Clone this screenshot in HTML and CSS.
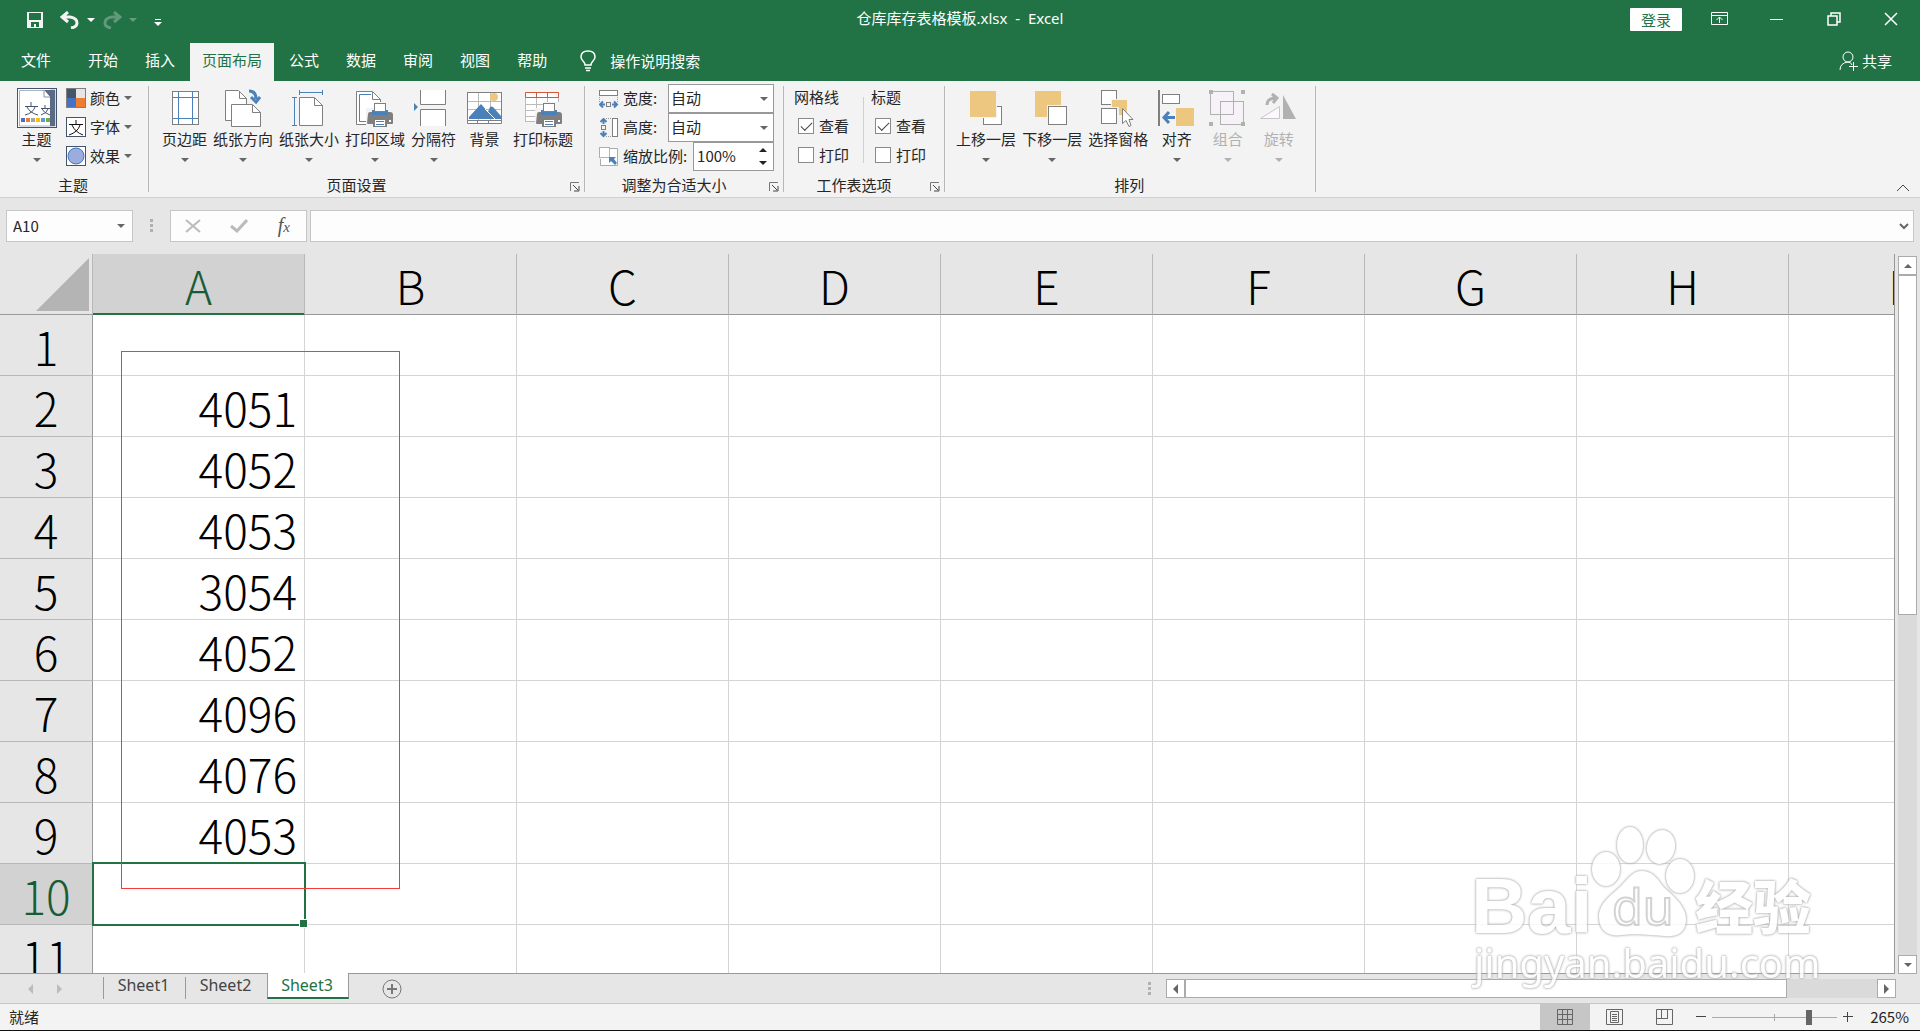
FILE: index.html
```html
<!DOCTYPE html>
<html lang="zh-CN">
<head>
    <meta charset="UTF-8">
    <meta name="viewport" content="width=device-width, initial-scale=1.0">
    <title>仓库库存表格模板.xlsx - Excel</title>
    <link rel="stylesheet" href="styles.css">
</head>
<body>

    <!-- shared icon parts -->
    <svg class="defs" width="0" height="0" aria-hidden="true">
        <symbol id="printer" viewBox="0 0 26 24">
            <path d="M1 11q0-2 2-2h20q3 0 3 3v8q0 1-1 1h-5v3H6v-3H1q-1 0-1-1z" fill="#7f7f7f"/>
            <rect x="5" y="7" width="16" height="5" fill="#4a81ba"/>
            <rect x="7.500" y=".5" width="11" height="8" fill="#fff" stroke="#7f7f7f"/>
            <rect x="7.500" y="16.500" width="11" height="7" fill="#fff" stroke="#7f7f7f"/>
            <path d="M9 18.500h8M9 21.500h8" stroke="#4a81ba"/>
            <rect x="22" y="17" width="2" height="2" fill="#fff"/>
        </symbol>
        <symbol id="launcher" viewBox="0 0 10 10">
            <path d="M.5 9V.5H9" fill="none" stroke="#777"/>
            <path d="M3 3l5 5M9 4v5H4" fill="none" stroke="#444"/>
        </symbol>
    </svg>

    <header class="titlebar">
        <div class="quick-access">
            <button type="button" aria-label="保存">
                <svg width="18" height="18" viewBox="0 0 18 18"><path fill="#f3f3f3" fill-rule="evenodd" d="M1 1h16v16H1zM3 2v7h12V2zM5 11v5h3v-3h2v3h3v-5z"/></svg>
            </button>
            <button type="button" class="undo" aria-label="撤消">
                <svg width="20" height="18" viewBox="0 0 20 18"><path d="M8 1L2 6l6 5M2 6h8q7 1 7 6 0 4-6 5" fill="none" stroke="#f3f3f3" stroke-width="3"/></svg>
                <span class="arrow"></span>
            </button>
            <button type="button" class="redo" aria-label="恢复" disabled>
                <svg width="20" height="18" viewBox="0 0 20 18"><path d="M12 1l6 5-6 5M18 6h-8q-7 1-7 6 0 4 6 5" fill="none" stroke="#f3f3f3" stroke-width="3"/></svg>
                <span class="arrow"></span>
            </button>
            <button type="button" class="customize" aria-label="自定义快速访问工具栏"><span class="bar"></span><span class="arrow"></span></button>
        </div>
        <div class="doc-title">仓库库存表格模板.xlsx&nbsp; -&nbsp; Excel</div>
        <div class="window-buttons">
            <button type="button" class="login">登录</button>
            <button type="button" class="win" aria-label="功能区显示选项">
                <svg width="18" height="14" viewBox="0 0 18 14"><path d="M.5.5h16v12H.5zM0 3.500h17M8.500 11V5M5.500 8l3-3 3 3" fill="none" stroke="#fff"/></svg>
            </button>
            <button type="button" class="win" aria-label="最小化">
                <svg width="14" height="14" viewBox="0 0 14 14"><path d="M0 7.500h13" stroke="#fff"/></svg>
            </button>
            <button type="button" class="win" aria-label="还原">
                <svg width="14" height="14" viewBox="0 0 14 14"><path d="M1 4h9v9H1zM4 4V1h9v9h-3" fill="none" stroke="#fff" stroke-width="1.500"/></svg>
            </button>
            <button type="button" class="win" aria-label="关闭">
                <svg width="14" height="14" viewBox="0 0 14 14"><path d="M1 1l12 12M13 1L1 13" stroke="#fff" stroke-width="1.500"/></svg>
            </button>
        </div>
    </header>

    <nav class="tabs">
        <a href="#" class="tab file">文件</a>
        <a href="#" class="tab">开始</a>
        <a href="#" class="tab">插入</a>
        <a href="#" class="tab active">页面布局</a>
        <a href="#" class="tab">公式</a>
        <a href="#" class="tab">数据</a>
        <a href="#" class="tab">审阅</a>
        <a href="#" class="tab">视图</a>
        <a href="#" class="tab">帮助</a>
        <a href="#" class="tell-me">
            <svg width="16" height="22" viewBox="0 0 16 22"><path d="M5 15q0-2-2-4Q1 9 1 7q0-6 7-6t7 6q0 2-2 4t-2 4zM5 18h6M6 20.500h4" fill="none" stroke="#fff" stroke-width="1.500"/></svg>
            操作说明搜索
        </a>
        <a href="#" class="share">
            <svg width="20" height="20" viewBox="0 0 20 20"><path d="M1 19q0-7 8-8M9 11q3 0 4 3M14.500 11v9M10 15.500h9" fill="none" stroke="#fff"/><circle cx="9" cy="6" r="5" fill="none" stroke="#fff"/></svg>
            共享
        </a>
    </nav>

    <div class="ribbon">
        <section class="group theme">
            <div class="tools">
                <button type="button" class="large">
                    <svg width="40" height="40" viewBox="0 0 40 40">
                        <rect x=".5" y=".5" width="39" height="39" fill="#fff" stroke="#44546a"/>
                        <path d="M33 2h5v36H2.500V2.500H27" fill="none" stroke="#a9b4c4"/>
                        <path d="M27 2h11v36h-5V9z" fill="#5b6b85"/>
                        <path d="M27 2v7h6" fill="#fff" stroke="#8593a8"/>
                        <path d="M14 14v4M8 18.500h13M18 19q-2 6-10 8M10 19q3 6 11 8M28 17v3M24 20.500h9M31 21q-1 4-7 6M25 21q2 4 8 6" fill="none" stroke="#44546a"/>
                        <path d="M4 30h4v4H4z" fill="#4472c4"/><path d="M9 30h4v4H9z" fill="#ed7d31"/><path d="M14 30h4v4h-4z" fill="#a5a5a5"/><path d="M19 30h4v4h-4z" fill="#ffc000"/><path d="M24 30h4v4h-4z" fill="#5b9bd5"/><path d="M29 30h4v4h-4z" fill="#70ad47"/>
                    </svg>
                    主题<span class="arrow"></span>
                </button>
                <div class="stack">
                    <button type="button" class="small">
                        <svg width="20" height="20" viewBox="0 0 20 20"><path d="M1 1h9v9H1z" fill="#44546a"/><path d="M10 1h9v9h-9z" fill="#e7e6e6"/><path d="M1 10h9v9H1z" fill="#4472c4"/><path d="M10 10h9v9h-9z" fill="#ed7d31"/><rect x=".5" y=".5" width="19" height="19" fill="none" stroke="#7f7f7f"/></svg>
                        颜色<span class="arrow"></span>
                    </button>
                    <button type="button" class="small">
                        <svg width="20" height="20" viewBox="0 0 20 20"><rect x=".5" y=".5" width="19" height="19" fill="#fff" stroke="#44546a"/><path d="M10 3v4M3 7.500h14M14 8q-2 7-11 10M6 8q3 7 11 10" fill="none" stroke="#111"/></svg>
                        字体<span class="arrow"></span>
                    </button>
                    <button type="button" class="small">
                        <svg width="20" height="20" viewBox="0 0 20 20"><rect x=".5" y=".5" width="19" height="19" fill="#fff" stroke="#44546a"/><circle cx="10" cy="10" r="8" fill="#9badde" stroke="#4472c4"/></svg>
                        效果<span class="arrow"></span>
                    </button>
                </div>
            </div>
            <h2>主题</h2>
        </section>

        <section class="group page-setup">
            <div class="tools">
                <button type="button" class="large">
                    <svg width="40" height="40" viewBox="0 0 40 40"><rect x="7.500" y="3.500" width="26" height="33" fill="#fff" stroke="#7f7f7f"/><path d="M13.500 4v32M27.500 4v32M8 9.500h25M8 30.500h25" stroke="#4a81ba"/></svg>
                    页边距<span class="arrow"></span>
                </button>
                <button type="button" class="large">
                    <svg width="40" height="40" viewBox="0 0 40 40"><path d="M8.500 32.500h-6v-30h13l8 8V16" fill="#fff" stroke="#7f7f7f"/><path d="M16.500 3v7.500h7" fill="none" stroke="#7f7f7f"/><path d="M8.500 16.500h21l8 8v14h-29z" fill="#fff" stroke="#7f7f7f"/><path d="M29.500 17v7.500h8" fill="none" stroke="#7f7f7f"/><path d="M26 3q7 0 7 8M28 9l5 5 4-5" fill="none" stroke="#4a81ba" stroke-width="3"/></svg>
                    纸张方向<span class="arrow"></span>
                </button>
                <button type="button" class="large">
                    <svg width="40" height="40" viewBox="0 0 40 40"><path d="M10.500 9.500h15l8 8v20h-23z" fill="#fff" stroke="#7f7f7f"/><path d="M25.500 10v7.500h8" fill="none" stroke="#7f7f7f"/><path d="M10.500 2v5M33.500 2v5M10 4.500h24M5.500 9v29M3 9.500h5M3 37.500h5" stroke="#4a81ba"/></svg>
                    纸张大小<span class="arrow"></span>
                </button>
                <button type="button" class="large">
                    <svg width="40" height="40" viewBox="0 0 40 40"><path d="M1.500 36.500v-33h16l8 8v25z" fill="#fff" stroke="#7f7f7f"/><path d="M17.500 4v7.500h8" fill="none" stroke="#7f7f7f"/><path d="M16 6.500H4.500v27H12" fill="none" stroke="#4a81ba"/><path d="M11 20h9v-6h18v26H11z" fill="#f3f3f3"/><use href="#printer" x="12" y="15" width="26" height="24"/></svg>
                    打印区域<span class="arrow"></span>
                </button>
                <button type="button" class="large">
                    <svg width="40" height="40" viewBox="0 0 40 40"><path d="M6.500 2v14.500h25V2M6.500 38V21.500h25V38" fill="#fff" stroke="#7f7f7f"/><path d="M0 15l4 4-4 4z" fill="#4a81ba"/></svg>
                    分隔符<span class="arrow"></span>
                </button>
                <button type="button" class="large">
                    <svg width="40" height="40" viewBox="0 0 40 40"><rect x="2.500" y="4.500" width="34" height="28" fill="#fff" stroke="#7f7f7f"/><path d="M13.500 5v27M25.500 5v27M3 13.500h33M3 21.500h33" stroke="#bbb"/><circle cx="29" cy="9" r="4" fill="#edc77f"/><path d="M4 31v-2l12-13 7 8 2-5q1-1 3 0l8 9v3z" fill="#4a81ba"/><path d="M20 21l11 11" stroke="#fff"/><path d="M2.500 32.500v3h34v-3zM12.500 33v2M23.500 33v2" fill="#fff" stroke="#7f7f7f"/></svg>
                    背景
                </button>
                <button type="button" class="large">
                    <svg width="40" height="40" viewBox="0 0 40 40"><rect x="2.500" y="4.500" width="33" height="29" fill="#fff" stroke="#bbb"/><path d="M13.500 10v23M24.500 10v23M3 16.500h32M3 22.500h32M3 28.500h32" stroke="#bbb"/><path d="M2.500 4.500h33v5h-33zM13.500 5v4M24.500 5v4" fill="#fff" stroke="#d5573b"/><path d="M12 20h8v-6h18v26H12z" fill="#f3f3f3"/><use href="#printer" x="13" y="15" width="26" height="24"/></svg>
                    打印标题
                </button>
            </div>
            <h2>页面设置</h2>
            <button type="button" class="launcher" aria-label="页面设置选项"><svg width="10" height="10"><use href="#launcher"/></svg></button>
        </section>

        <section class="group scale">
            <div class="fields">
                <div class="field">
                    <svg width="20" height="20" viewBox="0 0 20 20"><rect x=".5" y="1.500" width="18" height="5" fill="#fff" stroke="#7f7f7f"/><path d="M.5 8v6M18.500 8v6" stroke="#999" stroke-dasharray="1 1"/><rect x="7.500" y="13.500" width="4" height="4" fill="none" stroke="#7f7f7f"/><path d="M6 15.500H1M4 12.500l-3 3 3 3M13 15.500h5M15 12.500l3 3-3 3" fill="none" stroke="#4a81ba" stroke-width="2"/></svg>
                    <label for="pageWidth">宽度:</label>
                    <span class="dropdown"><select id="pageWidth"><option>自动</option><option>1 页</option></select></span>
                </div>
                <div class="field">
                    <svg width="20" height="20" viewBox="0 0 20 20"><rect x="13.500" y=".5" width="5" height="18" fill="#fff" stroke="#7f7f7f"/><path d="M7 .5h6M7 18.500h6" stroke="#999" stroke-dasharray="1 1"/><rect x="2.500" y="7.500" width="4" height="4" fill="none" stroke="#7f7f7f"/><path d="M4.500 6V1M1.500 4l3-3 3 3M4.500 13v5M1.500 15l3 3 3-3" fill="none" stroke="#4a81ba" stroke-width="2"/></svg>
                    <label for="pageHeight">高度:</label>
                    <span class="dropdown"><select id="pageHeight"><option>自动</option><option>1 页</option></select></span>
                </div>
                <div class="field">
                    <svg width="20" height="20" viewBox="0 0 20 20"><path d="M11 1.500h7.500v17h-17V12" fill="#fff" stroke="#aaa"/><rect x=".5" y=".5" width="10" height="10" fill="#fff" stroke="#666" stroke-dasharray="1 1"/><path d="M10 10h7l-2 2 3 4-2 2-4-4-2 2z" fill="#4a81ba"/></svg>
                    <label for="pageScale">缩放比例:</label>
                    <span class="spinner">
                        <input type="text" id="pageScale" value="100%">
                        <span class="steps">
                            <button type="button" aria-label="增大"><span class="arrow up"></span></button>
                            <button type="button" aria-label="减小"><span class="arrow"></span></button>
                        </span>
                    </span>
                </div>
            </div>
            <h2>调整为合适大小</h2>
            <button type="button" class="launcher" aria-label="调整为合适大小选项"><svg width="10" height="10"><use href="#launcher"/></svg></button>
        </section>

        <section class="group sheet-options">
            <div class="tools">
                <fieldset>
                    <legend>网格线</legend>
                    <label><input type="checkbox" checked>查看</label>
                    <label><input type="checkbox">打印</label>
                </fieldset>
                <fieldset>
                    <legend>标题</legend>
                    <label><input type="checkbox" checked>查看</label>
                    <label><input type="checkbox">打印</label>
                </fieldset>
            </div>
            <h2>工作表选项</h2>
            <button type="button" class="launcher" aria-label="工作表选项"><svg width="10" height="10"><use href="#launcher"/></svg></button>
        </section>

        <section class="group arrange">
            <div class="tools">
                <button type="button" class="large">
                    <svg width="40" height="40" viewBox="0 0 40 40"><rect x="17.500" y="18.500" width="18" height="18" fill="#fff" stroke="#7f7f7f"/><path d="M3 2h28v28H3z" fill="#f3f3f3"/><path d="M4 3h26v26H4z" fill="#edc77f"/></svg>
                    上移一层<span class="arrow"></span>
                </button>
                <button type="button" class="large">
                    <svg width="40" height="40" viewBox="0 0 40 40"><path d="M3 3h26v26H3z" fill="#edc77f"/><path d="M15 17h21v21H15z" fill="#f3f3f3"/><rect x="16.500" y="18.500" width="18" height="18" fill="#fff" stroke="#7f7f7f"/></svg>
                    下移一层<span class="arrow"></span>
                </button>
                <button type="button" class="large">
                    <svg width="40" height="40" viewBox="0 0 40 40"><rect x="3.500" y="2.500" width="15" height="14" fill="#fff" stroke="#7f7f7f"/><rect x="3.500" y="20.500" width="15" height="15" fill="#fff" stroke="#7f7f7f"/><path d="M13 11h17v17h-9v-9h-8z" fill="#f3f3f3"/><path d="M14 12h15v15h-8v-8h-7z" fill="#edc77f"/><path d="M24.500 20.500v15l3.500-3 3 6 2-1-2-6h4z" fill="#fff" stroke="#7f7f7f"/></svg>
                    选择窗格
                </button>
                <button type="button" class="large">
                    <svg width="40" height="40" viewBox="0 0 40 40"><path d="M2 2v36" stroke="#7f7f7f" stroke-width="2"/><rect x="5.500" y="6.500" width="17" height="9" fill="#fff" stroke="#7f7f7f"/><path d="M19 20h18v18H19z" fill="#edc77f"/><path d="M18 29.500H7M12 24l-5 5.500 5 5.500" fill="none" stroke="#4a81ba" stroke-width="3"/></svg>
                    对齐<span class="arrow"></span>
                </button>
                <button type="button" class="large" disabled>
                    <svg width="40" height="40" viewBox="0 0 40 40"><rect x="2.500" y="3.500" width="23" height="23" fill="#f6f2f8" stroke="#b1b1b1"/><rect x="12.500" y="13.500" width="23" height="23" fill="#f6f2f8" stroke="#b1b1b1"/><path d="M12.500 26.500v-13h13v13z" fill="none" stroke="#b1b1b1"/><path d="M1 2h4v4H1zM33 2h4v4h-4zM1 34h4v4H1zM33 34h4v4h-4z" fill="#b1b1b1"/></svg>
                    组合<span class="arrow"></span>
                </button>
                <button type="button" class="large" disabled>
                    <svg width="40" height="40" viewBox="0 0 40 40"><path d="M1.500 30.500h19v-12z" fill="#fcf8fd" stroke="#c6c6c6"/><path d="M24 7v24h13z" fill="#b1b1b1"/><path d="M8 17q0-7 9-7M13 6l5 4-4 5" fill="none" stroke="#b1b1b1" stroke-width="3"/></svg>
                    旋转<span class="arrow"></span>
                </button>
            </div>
            <h2>排列</h2>
        </section>

        <button type="button" class="collapse" aria-label="折叠功能区"><svg width="14" height="8" viewBox="0 0 14 8"><path d="M1 7l6-6 6 6" fill="none" stroke="#444"/></svg></button>
    </div>

    <div class="formula-bar">
        <div class="name-box">
            <input type="text" value="A10" aria-label="名称框">
            <span class="arrow"></span>
        </div>
        <span class="grip"></span>
        <div class="formula-buttons">
            <button type="button" aria-label="取消"><svg width="16" height="14" viewBox="0 0 16 14"><path d="M1 1l14 12M15 1L1 13" stroke="#bbb" stroke-width="2"/></svg></button>
            <button type="button" aria-label="输入"><svg width="18" height="14" viewBox="0 0 18 14"><path d="M1 7l6 5L17 1" fill="none" stroke="#bbb" stroke-width="3"/></svg></button>
            <button type="button" class="fx" aria-label="插入函数">f<small>x</small></button>
        </div>
        <div class="formula-input">
            <input type="text" aria-label="编辑栏">
            <svg width="10" height="7" viewBox="0 0 10 7"><path d="M1 1l4 4 4-4" fill="none" stroke="#666" stroke-width="2"/></svg>
        </div>
    </div>

    <main class="workspace">
        <div class="grid">
            <table>
                <thead>
                    <tr><th class="corner"><span></span></th><th class="selected">A</th><th>B</th><th>C</th><th>D</th><th>E</th><th>F</th><th>G</th><th>H</th><th>I</th></tr>
                </thead>
                <tbody>
                    <tr><th>1</th><td></td><td></td><td></td><td></td><td></td><td></td><td></td><td></td><td></td></tr>
                    <tr><th>2</th><td>4051</td><td></td><td></td><td></td><td></td><td></td><td></td><td></td><td></td></tr>
                    <tr><th>3</th><td>4052</td><td></td><td></td><td></td><td></td><td></td><td></td><td></td><td></td></tr>
                    <tr><th>4</th><td>4053</td><td></td><td></td><td></td><td></td><td></td><td></td><td></td><td></td></tr>
                    <tr><th>5</th><td>3054</td><td></td><td></td><td></td><td></td><td></td><td></td><td></td><td></td></tr>
                    <tr><th>6</th><td>4052</td><td></td><td></td><td></td><td></td><td></td><td></td><td></td><td></td></tr>
                    <tr><th>7</th><td>4096</td><td></td><td></td><td></td><td></td><td></td><td></td><td></td><td></td></tr>
                    <tr><th>8</th><td>4076</td><td></td><td></td><td></td><td></td><td></td><td></td><td></td><td></td></tr>
                    <tr><th>9</th><td>4053</td><td></td><td></td><td></td><td></td><td></td><td></td><td></td><td></td></tr>
                    <tr><th class="selected">10</th><td class="current"></td><td></td><td></td><td></td><td></td><td></td><td></td><td></td><td></td></tr>
                    <tr><th>11</th><td></td><td></td><td></td><td></td><td></td><td></td><td></td><td></td><td></td></tr>
                </tbody>
            </table>
            <div class="highlight"></div>
        </div>
        <div class="scroll vertical">
            <button type="button" aria-label="向上滚动"><span class="arrow up"></span></button>
            <div class="track"><div class="thumb"></div></div>
            <button type="button" aria-label="向下滚动"><span class="arrow"></span></button>
        </div>
    </main>

    <div class="sheet-bar">
        <div class="sheet-nav">
            <button type="button" aria-label="上一个工作表"><span class="arrow left"></span></button>
            <button type="button" aria-label="下一个工作表"><span class="arrow right"></span></button>
        </div>
        <a href="#" class="sheet">Sheet1</a>
        <a href="#" class="sheet">Sheet2</a>
        <a href="#" class="sheet active">Sheet3</a>
        <button type="button" class="add-sheet" aria-label="新工作表"><svg width="20" height="20" viewBox="0 0 20 20"><circle cx="10" cy="10" r="9" fill="none" stroke="#777"/><path d="M5 10h10M10 5v10" stroke="#777" stroke-width="2"/></svg></button>
        <span class="grip"></span>
        <div class="scroll horizontal">
            <button type="button" aria-label="向左滚动"><span class="arrow left"></span></button>
            <div class="track"><div class="thumb"></div></div>
            <button type="button" aria-label="向右滚动"><span class="arrow right"></span></button>
        </div>
    </div>

    <footer class="status-bar">
        <span class="state">就绪</span>
        <button type="button" class="view active" aria-label="普通"><svg width="16" height="16" viewBox="0 0 16 16"><path d="M.5.5h15v15H.5zM5.500 0v16M10.500 0v16M0 5.500h16M0 10.500h16" fill="none" stroke="#666"/></svg></button>
        <button type="button" class="view" aria-label="页面布局"><svg width="18" height="16" viewBox="0 0 18 16"><path d="M.5.5h16v15H.5zM4.500 2.500h8v11h-8zM6 5.500h5M6 7.500h5M6 9.500h5M6 11.500h5" fill="none" stroke="#666"/></svg></button>
        <button type="button" class="view" aria-label="分页预览"><svg width="18" height="16" viewBox="0 0 18 16"><path d="M.5.5h16v15H.5zM5.500 0v9.500M11.500 0v9.500M0 9.500h12" fill="none" stroke="#666"/></svg></button>
        <button type="button" class="zoom-step" aria-label="缩小"><svg width="10" height="10" viewBox="0 0 10 10"><path d="M0 4.500h10" stroke="#444"/></svg></button>
        <input type="range" class="zoom" min="0" max="100" value="79" aria-label="显示比例">
        <button type="button" class="zoom-step" aria-label="放大"><svg width="10" height="10" viewBox="0 0 10 10"><path d="M0 4.500h10M4.500 0v10" stroke="#444"/></svg></button>
        <span class="zoom-value">265%</span>
    </footer>

    <svg class="watermark" width="350" height="180" viewBox="0 0 350 180" aria-hidden="true">
        <g class="mark">
            <text class="latin" x="0" y="113">Bai</text>
            <ellipse cx="135" cy="49" rx="14" ry="17"/>
            <ellipse cx="159" cy="25" rx="13" ry="18"/>
            <ellipse cx="190" cy="27" rx="14" ry="17" transform="rotate(12 190 27)"/>
            <ellipse cx="209" cy="56" rx="14" ry="17"/>
            <path d="M171 51c10 0 15 7 20 14s24 18 24 34-12 18-22 17-30-3-42-1-23-3-23-18 15-24 22-31 11-15 21-15z"/>
            <text class="du" x="141" y="105">du</text>
            <text class="cjk" x="224" y="109">经验</text>
            <text class="site" x="3" y="158">jingyan.baidu.com</text>
        </g>
    </svg>

</body>
</html>
```
FILE: styles.css
```css
* {
    box-sizing: border-box;
}

body {
    position: relative;
    display: flex;
    flex-direction: column;
    height: 100vh;
    margin: 0;
    overflow: hidden;
    border-bottom: 1px solid #111;
    background: #e6e6e6;
    color: #262626;
    font-family: "Noto Sans CJK SC", "Noto Sans", sans-serif;
    font-size: 15px;
    line-height: 20px;
}

button,
input,
select {
    margin: 0;
    padding: 0;
    border: 0;
    background: none;
    color: inherit;
    font: inherit;
}

a {
    color: inherit;
    text-decoration: none;
}

svg {
    display: block;
    flex: none;
}

.defs {
    position: absolute;
}

/* small triangles */
.arrow {
    width: 0;
    height: 0;
    border: 4px solid transparent;
    border-top-color: currentColor;
    border-bottom-width: 0;
    color: #666;
}

.arrow.up {
    border-width: 0 4px 4px;
    border-bottom-color: currentColor;
}

.arrow.left {
    border-width: 5px 5px 5px 0;
    border-color: transparent currentColor transparent transparent;
}

.arrow.right {
    border-width: 5px 0 5px 5px;
    border-color: transparent transparent transparent currentColor;
}

/* title bar */
.titlebar {
    display: grid;
    grid-template-columns: 1fr auto 1fr;
    height: 43px;
    background: #217346;
    color: #fff;
}

.titlebar .arrow {
    color: #fff;
}

.quick-access {
    display: flex;
    align-items: flex-start;
    padding: 11px 26px;
}

.quick-access button {
    display: flex;
    align-items: center;
    gap: 7px;
}

.quick-access .undo {
    margin-left: 16px;
}

.quick-access .redo {
    margin-left: 7px;
    opacity: 0.3;
}

.quick-access .customize {
    flex-direction: column;
    gap: 2px;
    margin: 8px 0 0 17px;
}

.customize .bar {
    width: 6px;
    height: 1px;
    background: #fff;
}

.doc-title {
    padding-top: 8px;
    font-family: "Noto Sans", "Noto Sans CJK SC", sans-serif;
}

.window-buttons {
    display: flex;
    justify-content: flex-end;
    align-items: flex-start;
    padding-right: 1px;
}

.login {
    width: 52px;
    height: 23px;
    margin: 8px 9px 0 0;
    border-radius: 1px;
    background: #fff;
    color: #217346;
}

.win {
    display: flex;
    justify-content: center;
    align-items: center;
    width: 57px;
    height: 38px;
}

/* tabs */
.tabs {
    display: flex;
    gap: 3px;
    height: 38px;
    background: #217346;
    color: #fff;
    line-height: 34px;
}

.tab {
    padding: 0 12px;
}

.tab.file {
    padding: 0 22px 0 21px;
}

.tab.active {
    background: #f3f3f3;
    color: #217346;
}

.tell-me,
.share {
    display: flex;
    align-items: center;
    height: 36px;
}

.tell-me {
    gap: 14px;
    margin-left: 18px;
}

.share {
    gap: 3px;
    margin: 0 28px 0 auto;
}

/* ribbon */
.ribbon {
    display: flex;
    height: 117px;
    padding: 5px 0;
    border-bottom: 1px solid #d0d0d0;
    background: #f3f3f3;
}

.group {
    position: relative;
    display: flex;
    flex-direction: column;
    justify-content: space-between;
    border-right: 1px solid #b8b8b8;
}

.group h2 {
    margin: 0;
    padding-right: 20px;
    font-size: 15px;
    font-weight: normal;
    line-height: 14px;
    text-align: center;
}

.theme h2,
.arrange h2 {
    padding-right: 2px;
}

.tools {
    display: flex;
    gap: 6px;
    padding-top: 2px;
}

.large {
    display: flex;
    flex-direction: column;
    align-items: center;
    min-width: 45px;
    line-height: 22px;
}

.large .arrow {
    margin-top: 8px;
}

button:disabled,
.ribbon button:disabled .arrow {
    color: #b1b1b1;
}

.theme .tools {
    gap: 7px;
    padding-left: 14px;
    padding-right: 16px;
}

.stack {
    display: flex;
    flex-direction: column;
    gap: 9px;
}

.small {
    display: flex;
    align-items: center;
    gap: 4px;
}

.page-setup .tools {
    padding-left: 13px;
    padding-right: 11px;
}

.arrange .tools {
    padding-left: 11px;
    padding-right: 14px;
}

.launcher {
    position: absolute;
    right: 4px;
    bottom: 0;
}

.fields {
    width: 198px;
    padding: 0 9px 0 14px;
    margin-top: -2px;
}

.field {
    display: flex;
    align-items: center;
    gap: 4px;
    height: 29px;
    line-height: 18px;
}

.field label {
    padding-bottom: 2px;
    white-space: nowrap;
}

.dropdown,
.spinner {
    display: flex;
    align-items: center;
    height: 29px;
    margin-left: auto;
    border: 1px solid #999;
    background: #fff;
}

.dropdown {
    position: relative;
    width: 106px;
}

.dropdown::after {
    content: "";
    position: absolute;
    right: 5px;
    border: 4px solid transparent;
    border-top-color: #666;
    border-bottom-width: 0;
    pointer-events: none;
}

.dropdown select {
    width: 100%;
    height: 100%;
    padding: 0 0 2px 2px;
    appearance: none;
}

.spinner {
    width: 81px;
}

.spinner input {
    flex: 1;
    min-width: 0;
    padding: 0 0 2px 3px;
}

.steps {
    display: flex;
    flex-direction: column;
    gap: 9px;
    padding-right: 6px;
}

.steps .arrow {
    display: block;
    color: #222;
}

.sheet-options .tools {
    gap: 0;
    padding-top: 1px;
    padding-left: 10px;
}

.sheet-options fieldset {
    display: flex;
    flex-direction: column;
    gap: 9px;
    min-width: 0;
    height: 76px;
    margin: 0;
    padding: 0;
    border: 0;
}

.sheet-options fieldset:first-child {
    width: 70px;
    border-right: 1px solid #d0d0d0;
}

.sheet-options fieldset:last-child {
    width: 80px;
    padding-left: 7px;
}

.sheet-options legend {
    margin-bottom: 9px;
    padding: 0;
}

.sheet-options label {
    display: flex;
    align-items: center;
    gap: 5px;
    margin-left: 4px;
}

.sheet-options input {
    width: 16px;
    height: 16px;
    border: 1px solid #8a8a8a;
    background: #fff;
    appearance: none;
}

.sheet-options input:checked::before {
    content: "";
    display: block;
    width: 10px;
    height: 5px;
    margin: 3px 2px;
    border: solid #444;
    border-width: 0 0 1px 1px;
    transform: rotate(-45deg);
}

.collapse {
    align-self: flex-end;
    margin: 0 10px 0 auto;
}

/* formula bar */
.formula-bar {
    display: flex;
    padding: 12px 6px 12px;
}

.name-box,
.formula-buttons,
.formula-input {
    display: flex;
    align-items: center;
    height: 32px;
    border: 1px solid #c6c6c6;
    background: #fdfdfd;
}

.name-box {
    width: 127px;
    padding: 0 7px 0 6px;
}

.name-box input {
    flex: 1;
    min-width: 0;
}

.grip {
    width: 3px;
    height: 13px;
    background: repeating-linear-gradient(#b0b0b0 0 3px, transparent 3px 5px);
}

.formula-bar .grip {
    margin: 9px 17px;
}

.formula-buttons {
    justify-content: space-between;
    width: 137px;
    padding: 0 16px 0 14px;
}

.fx {
    color: #555;
    font-family: "Liberation Serif", serif;
    font-size: 20px;
    font-style: italic;
}

.fx small {
    font-size: 15px;
}

.formula-input {
    flex: 1;
    margin-left: 3px;
    padding: 0 4px 0 5px;
}

.formula-input input {
    flex: 1;
}

/* worksheet */
.workspace {
    display: flex;
    flex: 1;
    min-height: 0;
}

.grid {
    position: relative;
    flex: 1;
    min-width: 0;
    overflow: hidden;
    border-right: 1px solid #999;
    border-bottom: 1px solid #999;
}

table {
    width: 2001px;
    table-layout: fixed;
    border-spacing: 0;
    background: #fff;
    color: #000;
    font-size: 46px;
    line-height: 58px;
}

th,
td {
    height: 61px;
    padding: 2px 0 0;
    border-right: 1px solid #d4d4d4;
    border-bottom: 1px solid #d4d4d4;
    font-weight: 300;
}

th {
    border-color: #999;
    background: #e6e6e6;
}

thead th {
    border-right-color: #b8b8b8;
}

tbody th {
    border-bottom-color: #b8b8b8;
}

td {
    padding-right: 7px;
    text-align: right;
}

th.selected {
    background: #d2d2d2;
    color: #185c37;
}

thead .selected {
    box-shadow: inset 0 -1px #217346;
    border-bottom-color: #217346;
}

.corner {
    width: 93px;
}

.corner span {
    display: block;
    width: 53px;
    height: 53px;
    margin: 2px 3px 3px auto;
    background: #b4b4b4;
    clip-path: polygon(100% 0, 100% 100%, 0 100%);
}

.current {
    position: relative;
}

/* selection frame and its fill handle */
.current::before {
    content: "";
    position: absolute;
    inset: -2px -2px -2px -1px;
    border: 2px solid #217346;
}

.current::after {
    content: "";
    position: absolute;
    right: -4px;
    bottom: -4px;
    width: 7px;
    height: 7px;
    border: 1px solid #fff;
    background: #217346;
}

.highlight {
    position: absolute;
    top: 97px;
    left: 121px;
    width: 279px;
    height: 538px;
    border: 1px solid #f43b36;
}

/* scrollbars */
.scroll {
    display: flex;
}

.scroll button {
    display: flex;
    justify-content: center;
    align-items: center;
    width: 19px;
    height: 19px;
    border: 1px solid #ababab;
    background: #fff;
}

.track {
    flex: 1;
    background: #dadada;
}

.thumb {
    border: 1px solid #ababab;
    background: #fff;
}

.vertical {
    flex-direction: column;
    margin: 2px 3px 0;
}

.vertical .thumb {
    height: 50%;
}

.horizontal .thumb {
    width: 87%;
    height: 19px;
}

/* sheet tabs */
.sheet-bar {
    display: flex;
    height: 29px;
}

.sheet-nav {
    display: flex;
    gap: 24px;
    width: 103px;
    padding-left: 28px;
}

.sheet-nav .arrow {
    display: block;
    color: #bbb;
}

.sheet {
    width: 82px;
    height: 22px;
    margin-top: 3px;
    padding-right: 2px;
    border-left: 1px solid #999;
    color: #444;
    font-family: "Noto Sans", sans-serif;
    font-size: 16px;
    line-height: 16px;
    text-align: center;
}

.sheet.active {
    height: 26px;
    margin-top: -1px;
    padding-top: 4px;
    border-right: 1px solid #999;
    border-bottom: 2px solid #217346;
    background: #fff;
    color: #217346;
    z-index: 1;
}

.add-sheet {
    margin-left: 33px;
}

.sheet-bar .grip {
    margin: 8px 15px 0 auto;
}

.horizontal {
    width: 38%;
    margin: 5px 24px 5px 0;
}

/* status bar */
.status-bar {
    display: flex;
    align-items: center;
    height: 27px;
    border-top: 1px solid #c6c6c6;
    background: #f3f3f3;
}

.state {
    margin: 0 auto 0 9px;
}

.view {
    display: flex;
    justify-content: center;
    align-items: center;
    width: 50px;
    height: 26px;
}

.view.active {
    background: #c6c6c6;
}

.zoom-step {
    margin-left: 6px;
}

.zoom {
    width: 125px;
    height: 16px;
    margin-left: 6px;
    background: linear-gradient(#aaa, #aaa) center / 1px 7px no-repeat,
        linear-gradient(#aaa, #aaa) center / 100% 1px no-repeat;
    appearance: none;
}

.zoom::-webkit-slider-thumb {
    width: 6px;
    height: 15px;
    background: #666;
    appearance: none;
}

.zoom-value {
    width: 67px;
    padding-right: 11px;
    text-align: right;
}

/* watermark over the sheet */
.watermark {
    position: absolute;
    right: 99px;
    bottom: 30px;
    pointer-events: none;
}

.mark {
    fill: #fff;
    filter: drop-shadow(0 0 1px #999) drop-shadow(0 0 1px #ccc);
    opacity: 0.85;
}

.mark .latin {
    font: bold 78px "Liberation Sans", sans-serif;
}

.mark .du {
    fill: #fff;
    stroke: #ccc;
    stroke-width: 2px;
    font: 50px "Noto Sans", sans-serif;
}

.mark .cjk {
    font: 900 58px "Noto Sans CJK SC", sans-serif;
}

.mark .site {
    font: 40px "Noto Sans", sans-serif;
}
```
